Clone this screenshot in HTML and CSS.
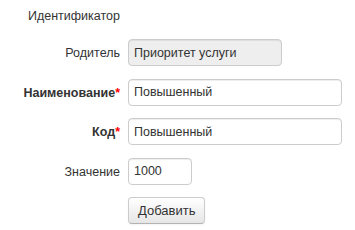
FILE: index.html
```html
<!DOCTYPE html>
<html lang="en">
<head>
  <meta charset="UTF-8">
  <title>Идентификатор</title>
  <link rel="stylesheet" href="styles.css">
</head>
<body>
  <!-- Priority form -->
  <div class="form">
    <div class="form-title">Идентификатор</div>

    <div class="row">
      <label class="label">Родитель</label>
      <input class="field field-mid" type="text" value="Приоритет услуги" disabled>
    </div>

    <div class="row">
      <label class="label label-bold">Наименование<span class="req">*</span></label>
      <input class="field field-wide" type="text" value="Повышенный">
    </div>

    <div class="row">
      <label class="label label-bold">Код<span class="req">*</span></label>
      <input class="field field-wide" type="text" value="Повышенный">
    </div>

    <div class="row">
      <label class="label">Значение</label>
      <input class="field field-small" type="text" value="1000">
    </div>

    <div class="row">
      <span class="label"></span>
      <button class="btn" type="button">Добавить</button>
    </div>
  </div>
</body>
</html>
```

FILE: styles.css
```css
/* Global */
body {
  margin: 0;
  font-family: "Liberation Sans", Arial, sans-serif;
  font-size: 12.5px;
  color: #333;
  background: #fff;
}
.form {
  padding-top: 6px;
}
.form-title {
  width: 128px;
  box-sizing: border-box;
  padding-right: 8px;
  text-align: right;
  line-height: 20px;
  margin-bottom: 13px;
}
.row {
  display: flex;
  align-items: center;
  height: 27px;
  margin-bottom: 12.5px;
}
.label {
  width: 128px;
  flex-shrink: 0;
  text-align: right;
  padding-right: 8px;
  box-sizing: border-box;
  padding-top: 1px;
}
.label-bold {
  font-weight: bold;
}
.req {
  color: #f00;
}
/* Inputs */
.field {
  box-sizing: border-box;
  height: 27px;
  padding: 3px 5px;
  font-family: inherit;
  font-size: 12.5px;
  color: #333;
  background: #fff;
  border: 1px solid #ccc;
  border-radius: 4px;
  box-shadow: inset 0 1px 1px rgba(0,0,0,0.075);
  margin: 0;
}
.field:disabled {
  background: #eee;
  color: #333;
}
.field-mid {
  width: 154px;
}
.field-wide {
  width: 214px;
}
.field-small {
  width: 64px;
}
/* Button */
.btn {
  box-sizing: border-box;
  height: 27px;
  padding: 3px 9px;
  font-family: inherit;
  font-size: 13px;
  color: #333;
  background: linear-gradient(#fff, #e6e6e6);
  border: 1px solid #ccc;
  border-bottom-color: #b3b3b3;
  border-radius: 4px;
  box-shadow: inset 0 1px 0 rgba(255,255,255,0.2), 0 1px 2px rgba(0,0,0,0.05);
  margin: 0;
  cursor: pointer;
}
```
